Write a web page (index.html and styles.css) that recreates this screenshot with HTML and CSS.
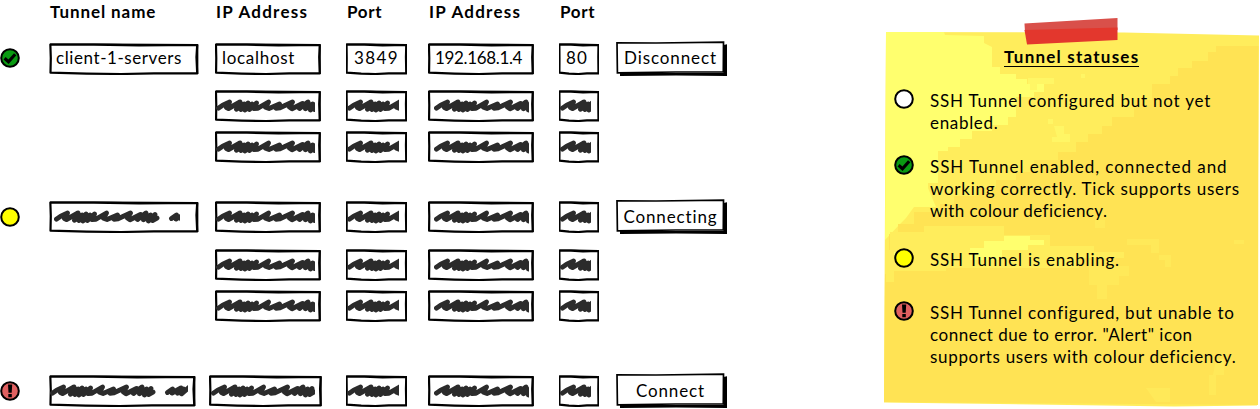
FILE: index.html
```html
<!DOCTYPE html>
<html lang="en">
<head>
<meta charset="utf-8">
<title>SSH Tunnels</title>
<link rel="stylesheet" href="styles.css">
</head>
<body>
<svg class="defs" aria-hidden="true">
  <symbol id="frame" viewBox="0 0 100 32" preserveAspectRatio="none">
    <path class="ink" d="M.9 1.6L30 1.7 60 2.4 98.800 2 98.300 14 98.800 30.4 70 30.4 48 31 25 30.6 1 29.7 1.2 15Z"/>
    <path class="ink thin" d="M.7 1.2L40 1.1 99.100 1.8 99.100 31"/>
  </symbol>
  <symbol id="button" viewBox="0 0 111 36">
    <path d="M4 32L107.500 32 107.500 4 111 3.200 111 35 60 34.600 4 35Z"/>
    <path fill="#fff" stroke="#000" stroke-width="1.7" d="M1 1.800L40 2 107.500 1.200 107.300 31 60 31 1.400 31.800Z"/>
  </symbol>
  <symbol id="ok" viewBox="0 0 20 20"><circle cx="10" cy="10" r="8.800" fill="#0a9a12" stroke="#000" stroke-width="2"/><path d="M4.600 10.300L8.500 13.800 15.200 6.300" fill="none" stroke="#000" stroke-width="3.200"/></symbol>
  <symbol id="busy" viewBox="0 0 20 20"><circle cx="10" cy="10" r="8.800" fill="#ff0" stroke="#000" stroke-width="2"/></symbol>
  <symbol id="off" viewBox="0 0 20 20"><circle cx="10" cy="10" r="8.800" fill="#fff" stroke="#000" stroke-width="2"/></symbol>
  <symbol id="alert" viewBox="0 0 20 20"><circle cx="10" cy="10" r="8.800" fill="#e06060" stroke="#000" stroke-width="2"/><path d="M8 3.500h4.200l-.5 8.300H8.500zM8.300 13h3.500v3.300H8.300z"/></symbol>
  <g id="scribble">
    <path class="marker" d="M2.500 18.200Q7 14.500 13.500 12L10.500 17.500L12.500 18.500L24 12L20.500 19.200L28 14L25 19.500L32 13L29 20L36 14L33.500 19.500L40.500 13L38 18.500L42 18.200L52.500 12L49.500 17.200L53 18.500L63.500 14L60 18.200L64 17.800L76.500 12L73.500 17L76 18.800L86.500 13.500L83.500 18.500L92 12L89.500 18.800L96.500 14L94.500 20L101 13.500L98.500 19.500L103 17"/>
    <path class="marker" d="M117.500 17.500L122.500 14L122 18L131 13L127.500 18.200L133.500 14L131.500 18.800L140 11.500"/>
  </g>
</svg>
<main class="page">
  <section class="tunnels">
    <div class="row head"><b class="c-name t1">Tunnel name</b><b class="t2">IP Address</b><b class="t3">Port</b><b class="t2">IP Address</b><b class="t3">Port</b></div>

    <div class="row first">
      <svg class="status"><use href="#ok"/></svg>
      <div class="field name"><svg class="frame"><use href="#frame"/></svg><span class="value v-name">client-1-servers</span></div>
      <div class="field ip"><svg class="frame"><use href="#frame"/></svg><span class="value v-host">localhost</span></div>
      <div class="field port"><svg class="frame"><use href="#frame"/></svg><span class="value v-port">3849</span></div>
      <div class="field ip"><svg class="frame"><use href="#frame"/></svg><span class="value v-ip">192.168.1.4</span></div>
      <div class="field rport"><svg class="frame"><use href="#frame"/></svg><span class="value v-rport">80</span></div>
      <button class="action"><svg class="btn"><use href="#button"/></svg><span>Disconnect</span></button>
    </div>
    <div class="row sub">
      <div class="field ip"><svg class="frame"><use href="#frame"/></svg><svg class="mask m-ip"><use href="#scribble"/></svg></div>
      <div class="field port"><svg class="frame"><use href="#frame"/></svg><svg class="mask m-port"><use href="#scribble"/></svg></div>
      <div class="field ip"><svg class="frame"><use href="#frame"/></svg><svg class="mask m-rip"><use href="#scribble"/></svg></div>
      <div class="field rport"><svg class="frame"><use href="#frame"/></svg><svg class="mask m-rport"><use href="#scribble"/></svg></div>
    </div>
    <div class="row sub last">
      <div class="field ip"><svg class="frame"><use href="#frame"/></svg><svg class="mask m-ip"><use href="#scribble"/></svg></div>
      <div class="field port"><svg class="frame"><use href="#frame"/></svg><svg class="mask m-port"><use href="#scribble"/></svg></div>
      <div class="field ip"><svg class="frame"><use href="#frame"/></svg><svg class="mask m-rip"><use href="#scribble"/></svg></div>
      <div class="field rport"><svg class="frame"><use href="#frame"/></svg><svg class="mask m-rport"><use href="#scribble"/></svg></div>
    </div>

    <div class="row second">
      <svg class="status"><use href="#busy"/></svg>
      <div class="field name"><svg class="frame"><use href="#frame"/></svg><svg class="mask m-name"><use href="#scribble"/></svg></div>
      <div class="field ip"><svg class="frame"><use href="#frame"/></svg><svg class="mask m-ip"><use href="#scribble"/></svg></div>
      <div class="field port"><svg class="frame"><use href="#frame"/></svg><svg class="mask m-port"><use href="#scribble"/></svg></div>
      <div class="field ip"><svg class="frame"><use href="#frame"/></svg><svg class="mask m-rip"><use href="#scribble"/></svg></div>
      <div class="field rport"><svg class="frame"><use href="#frame"/></svg><svg class="mask m-rport"><use href="#scribble"/></svg></div>
      <button class="action low"><svg class="btn"><use href="#button"/></svg><span>Connecting</span></button>
    </div>
    <div class="row sub">
      <div class="field ip"><svg class="frame"><use href="#frame"/></svg><svg class="mask m-ip"><use href="#scribble"/></svg></div>
      <div class="field port"><svg class="frame"><use href="#frame"/></svg><svg class="mask m-port"><use href="#scribble"/></svg></div>
      <div class="field ip"><svg class="frame"><use href="#frame"/></svg><svg class="mask m-rip"><use href="#scribble"/></svg></div>
      <div class="field rport"><svg class="frame"><use href="#frame"/></svg><svg class="mask m-rport"><use href="#scribble"/></svg></div>
    </div>
    <div class="row sub last">
      <div class="field ip"><svg class="frame"><use href="#frame"/></svg><svg class="mask m-ip"><use href="#scribble"/></svg></div>
      <div class="field port"><svg class="frame"><use href="#frame"/></svg><svg class="mask m-port"><use href="#scribble"/></svg></div>
      <div class="field ip"><svg class="frame"><use href="#frame"/></svg><svg class="mask m-rip"><use href="#scribble"/></svg></div>
      <div class="field rport"><svg class="frame"><use href="#frame"/></svg><svg class="mask m-rport"><use href="#scribble"/></svg></div>
    </div>

    <div class="row third">
      <svg class="status"><use href="#alert"/></svg>
      <div class="field name short"><svg class="frame"><use href="#frame"/></svg><svg class="mask m-name2"><use href="#scribble"/></svg></div>
      <div class="field ip wide"><svg class="frame"><use href="#frame"/></svg><svg class="mask m-ip2"><use href="#scribble"/></svg></div>
      <div class="field port"><svg class="frame"><use href="#frame"/></svg><svg class="mask m-port"><use href="#scribble"/></svg></div>
      <div class="field ip"><svg class="frame"><use href="#frame"/></svg><svg class="mask m-rip"><use href="#scribble"/></svg></div>
      <div class="field rport"><svg class="frame"><use href="#frame"/></svg><svg class="mask m-rport"><use href="#scribble"/></svg></div>
      <button class="action low"><svg class="btn"><use href="#button"/></svg><span>Connect</span></button>
    </div>
  </section>

  <aside class="note">
    <svg class="paper" viewBox="0 0 376 409">
      <path fill="#ffed5c" d="M2 32L240 32.500 375 35.500 373.500 250 373 405.500 290 406.500 0 402.500 1 200Z"/>
      <path fill="#ffff6e" d="M2 32L60 32 61 35 100 36V43L108 47V67H116V74H132V79H143V84H146V90H153V84H160V92H150V97H132V117H124V125H108V131H88V139H76V147H64V151H54V183H44V188L52 207H30L22 218 16 224 1 240Z"/>
      <path fill="#ffe354" d="M374.500 46H332V52H324V61H308V68H294V76H286V84H268V100H250V117H228V126H218V134H204V142H192V152H174V160H150V172H132V180H112V188H92V196H70V204H56V212H30V224H14V234H5V274H1L0 402 374 405Z"/>
      <path fill="#ffed5c" d="M6 232H40V226H120V235H166V246H210V252H240V258H195V268H62V271H10V282H2V250H6z"/>
      <path fill="#ffff6e" d="M86 248H100V241H120V236H146V240H160V245H144V250H118V260H86zM10 252H28V257H10z"/>
      <path fill="#ffff6e" d="M164 119h5v5h-5zM170 126h10v8h6v8h-18v-5h5zM197 74h4v4h-4zM144 78h26v6h-14v6h-12z" opacity=".5"/>
      <path fill="#ffed5c" d="M205 266h40v10h-10v9h-12v14h-10v-14h-8zM211 220h10v8h-10zM243 239h32v14h-8v-8h-24zM350 240h10v4h-10zM275 255h12v12h-6v-7h-6zM332 359h8v16h-8v20h-7v-20h4zM262 388h24v14h-14z" opacity=".65"/>
      <path fill="#d9504a" d="M140.500 23.500L233.500 18V30L141 33Z"/>
      <path fill="#e3372d" d="M140.500 30L233.500 27.500V40L143 44.500Z"/>
    </svg>
    <h2>Tunnel statuses</h2>
    <ul class="legend">
      <li class="l1"><svg class="status"><use href="#off"/></svg><p><span class="s81">SSH Tunnel configured but not yet</span><span class="s72">enabled.</span></p></li>
      <li class="l2"><svg class="status"><use href="#ok"/></svg><p><span class="s98">SSH Tunnel enabled, connected and</span><span class="s77">working correctly. Tick supports users</span><span class="s44">with colour deficiency.</span></p></li>
      <li class="l3"><svg class="status"><use href="#busy"/></svg><p><span class="s81">SSH Tunnel is enabling.</span></p></li>
      <li class="l4"><svg class="status"><use href="#alert"/></svg><p><span class="s81">SSH Tunnel configured, but unable to</span><span class="s55">connect due to error. "Alert" icon</span><span class="s72">supports users with colour deficiency.</span></p></li>
    </ul>
  </aside>
</main>
</body>
</html>
```
FILE: styles.css
```css
* { box-sizing: border-box; }
body { margin: 0; background: #fff; color: #000; font: 17px/22px Lato, "Open Sans", sans-serif; }
.defs { position: absolute; width: 0; height: 0; }
.ink { fill: none; stroke: #000; stroke-width: 2.200; stroke-linejoin: round; vector-effect: non-scaling-stroke; }
.thin { stroke-width: 1.400px; }
.marker { fill: none; stroke: #2b2b2b; stroke-width: 4.900px; stroke-linecap: round; stroke-linejoin: round; }

.page { display: flex; width: 1260px; height: 409px; overflow: hidden; }
.tunnels { width: 884px; flex: none; }
.row { display: grid; grid-template-columns: 49px 166px 131px 82px 131px 57px 111px; height: 32px; }
.head { height: 24px; padding-top: 1px; margin-bottom: 19px; white-space: nowrap; }
.head b { padding-left: 1px; }
.t1 { letter-spacing: .9px; }
.t2 { letter-spacing: 1.25px; }
.t3 { letter-spacing: .7px; }
.c-name { grid-column-start: 2; }
.sub .field:first-child { grid-column-start: 3; }
.first { margin-bottom: 15px; }
.sub { margin-bottom: 9px; }
.sub.last { margin-bottom: 38px; }
.second { margin-bottom: 16px; }
.third { margin-top: 53px; }

.status { display: block; width: 20px; height: 20px; }
.row .status { margin-top: 6px; margin-left: -.5px; }
.row.first .status { margin-top: 5px; }
.field { display: grid; align-items: center; height: 32px; white-space: nowrap; }
.field > * { grid-area: 1 / 1; }
.name { width: 150px; }
.short { width: 147px; }
.ip { width: 106px; }
.wide { width: 113px; margin-left: -6px; }
.port { width: 61px; }
.rport { width: 40px; }
.frame { width: 100%; height: 32px; }
.value { padding-left: 7px; margin-top: -2px; justify-self: start; }
.v-name { letter-spacing: .58px; }
.v-host { letter-spacing: .7px; }
.v-port { letter-spacing: 1.4px; padding-left: 8px; }
.v-ip { letter-spacing: -.35px; }
.v-rport { letter-spacing: 1.2px; }
.mask { height: 32px; overflow: hidden; }
.m-name { margin-left: 5px; width: 126px; }
.m-name2 { margin-left: 1px; width: 138px; }
.m-ip { margin-left: 1px; width: 99px; }
.m-ip2 { margin-left: 2px; width: 104px; }
.m-port { margin-left: 1px; width: 52px; }
.m-rip { margin-left: 6px; width: 95px; }
.m-rport { margin-left: 1px; width: 31px; }

.action { display: grid; place-items: center; width: 111px; height: 36px; margin: -2px 0 0; padding: 0; border: 0; background: none; color: inherit; font: inherit; letter-spacing: .88px; }
.action > * { grid-area: 1 / 1; }
.action span { margin: -3px 2px 0 0; }
.action.low span { margin-top: -1px; }
.btn { width: 111px; height: 36px; }

.note { display: grid; grid-template-rows: 409px; width: 376px; }
.note > * { grid-area: 1 / 1; }
.paper { width: 376px; height: 409px; }
.note h2 { justify-self: start; align-self: start; margin: 46px 0 0 120px; height: 21px; border-bottom: 1px solid #000; font-size: 17px; line-height: 22px; letter-spacing: 1.22px; white-space: nowrap; }
.legend { margin: 90px 0 0 10px; padding: 0; list-style: none; }
.legend li { display: flex; gap: 16px; }
.legend .status { margin-top: -1px; flex: none; }
.legend p { margin: 0; white-space: nowrap; }
.legend p span { display: block; }
.s81 { letter-spacing: .78px; }
.s72 { letter-spacing: .68px; }
.s98 { letter-spacing: .94px; }
.s77 { letter-spacing: .75px; }
.s55 { letter-spacing: .52px; }
.s44 { letter-spacing: .42px; }
.l1 { margin-bottom: 22px; }
.l2 { margin-bottom: 27px; }
.l3 { margin-bottom: 31px; }
```
